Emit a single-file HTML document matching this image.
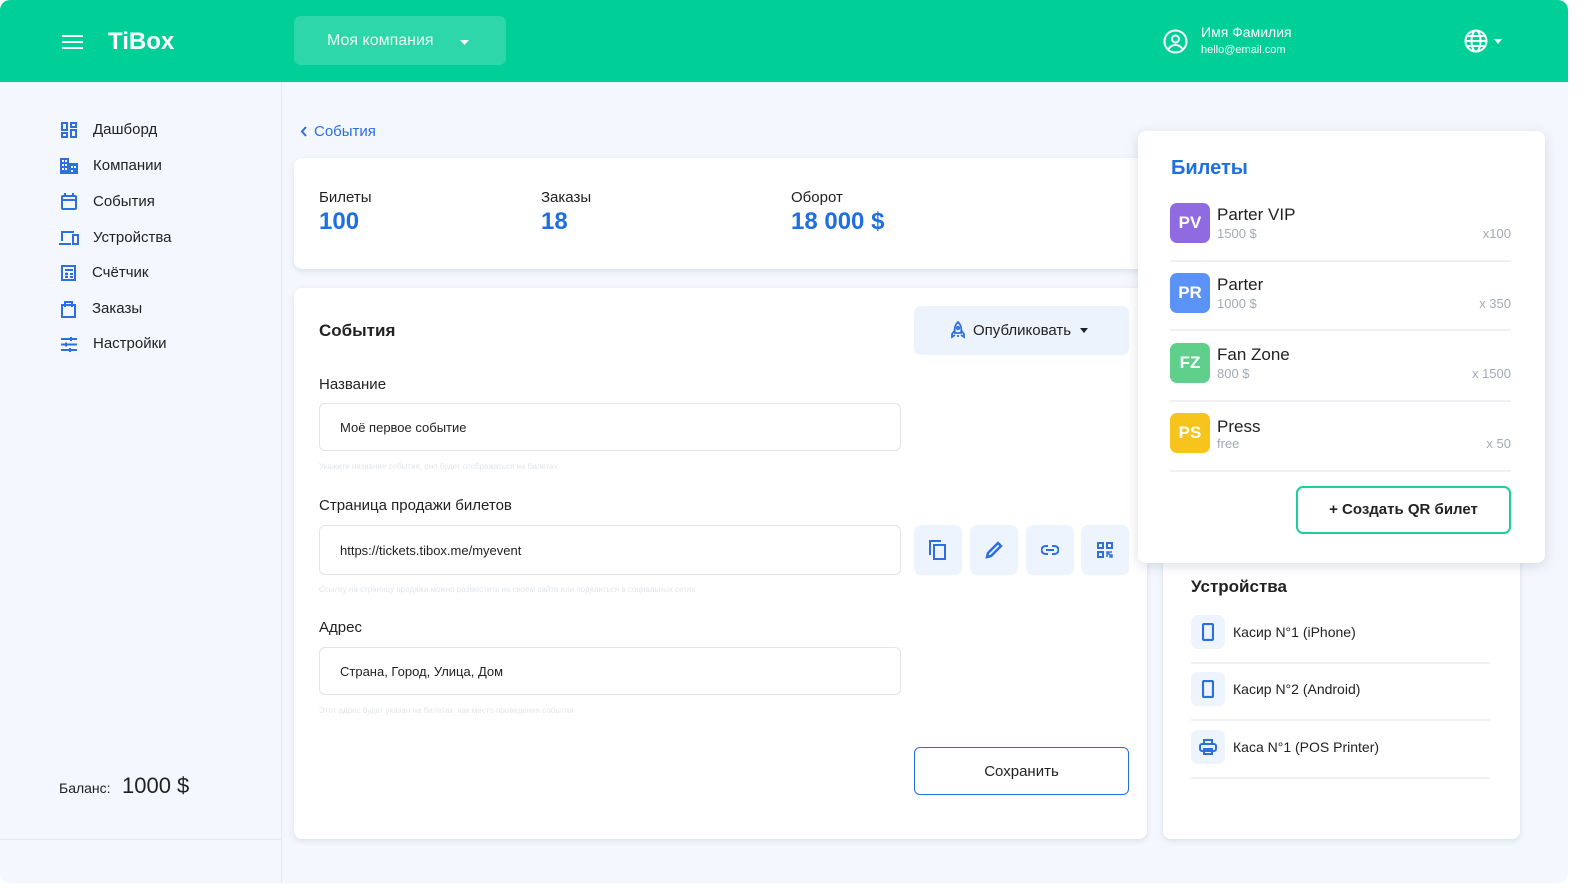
<!DOCTYPE html>
<html style="width:1590px;height:895px;overflow:hidden"><head><meta charset="utf-8"><style>
*{box-sizing:border-box;margin:0;padding:0}
body{width:1590px;height:895px;background:#fff;font-family:"Liberation Sans","DejaVu Sans",sans-serif;color:#222;position:relative;overflow:hidden}
.frame{position:absolute;left:0;top:0;width:1568px;height:883px;background:#f4f7fd;border-radius:10px;overflow:hidden}
.a{position:absolute}
.hdr{left:0;top:0;width:1568px;height:82px;background:#00cf98}
.t{position:absolute;white-space:nowrap;line-height:1}
.card{position:absolute;background:#fff;border-radius:8px;box-shadow:0 2px 6px rgba(30,50,90,.12)}
.nav svg{position:absolute}
.inp{position:absolute;left:319px;width:582px;border:1px solid #e1e4ea;border-radius:6px;background:#fff;font-size:13px;padding-left:20px;display:flex;align-items:center;color:#222}
.hint{position:absolute;left:319px;font-size:8px;color:#e2e5ea;white-space:nowrap}
.lbl{position:absolute;left:319px;font-size:15px;color:#222}
.ib{position:absolute;top:525px;width:48px;height:50px;background:#eef4fd;border-radius:7px;display:flex;align-items:center;justify-content:center}
.av{position:absolute;left:1170px;width:40px;height:40px;border-radius:7px;color:#fff;font-weight:bold;font-size:17px;display:flex;align-items:center;justify-content:center}
.tn{position:absolute;left:1217px;font-size:17px;color:#222;white-space:nowrap;line-height:1}
.tp{position:absolute;left:1217px;font-size:13px;color:#a3a9b5;line-height:1}
.tq{position:absolute;right:57px;font-size:13px;color:#a3a9b5;line-height:1}
.dv{position:absolute;height:2px;background:#eef0f3}
.di{position:absolute;left:1191px;width:34px;height:34px;border-radius:7px;background:#eef4fd;display:flex;align-items:center;justify-content:center}
.dt{position:absolute;left:1233px;font-size:14px;color:#222;line-height:1;white-space:nowrap}
</style></head><body>
<div class="frame">
<div class="a hdr"></div>
<svg class="a" style="left:62px;top:35px" width="21" height="14"><path d="M0 1h21M0 7h21M0 13h21" stroke="#fff" stroke-width="2"/></svg>
<div class="t" style="left:108px;top:30px;font-size:24px;font-weight:bold;color:#fff">TiBox</div>
<div class="a" style="left:294px;top:16px;width:212px;height:49px;background:rgba(255,255,255,.18);border-radius:7px"></div>
<div class="t" style="left:327px;top:33px;font-size:16px;color:#e6fbf4">Моя компания</div>
<svg class="a" style="left:460px;top:40px" width="9" height="5"><path d="M0 0h9L4.5 5z" fill="#fff"/></svg>
<svg class="a" style="left:1163px;top:29px" width="25" height="25" fill="none" stroke="#fff" stroke-width="2"><circle cx="12.5" cy="12.5" r="11"/><circle cx="12.5" cy="10" r="3.5"/><path d="M5.5 20c2-3 4.5-4 7-4s5 1 7 4"/></svg>
<div class="t" style="left:1201px;top:25px;font-size:14px;color:#fff">Имя Фамилия</div>
<div class="t" style="left:1201px;top:45px;font-size:11px;color:#fff">hello@email.com</div>
<svg class="a" style="left:1464px;top:29px" width="24" height="24" fill="none" stroke="#fff" stroke-width="2"><circle cx="12" cy="12" r="10.5"/><ellipse cx="12" cy="12" rx="4.5" ry="10.5"/><path d="M1.5 12h21M3 7h18M3 17h18"/></svg>
<svg class="a" style="left:1494px;top:39px" width="8" height="5"><path d="M0 0h8L4 5z" fill="#fff"/></svg>

<div class="a" style="left:281px;top:82px;width:1px;height:801px;background:#e6e9ef"></div>
<div class="a" style="left:0;top:839px;width:281px;height:1px;background:#e6e9ef"></div>
<div class="nav">
<svg style="left:61px;top:122px" width="16" height="16" fill="none" stroke="#2d6fe0" stroke-width="2"><rect x="1" y="1" width="5" height="7"/><rect x="10" y="1" width="5" height="4"/><rect x="1" y="11" width="5" height="4"/><rect x="10" y="8" width="5" height="7"/></svg>
<svg style="left:60px;top:158px" width="18" height="16" fill="#2d6fe0"><path d="M0 0h9v16H0zM9 5h9v11H9z"/><path d="M2 2h2v2H2zM5 2h2v2H5zM2 6h2v2H2zM5 6h2v2H5zM2 10h2v2H2zM5 10h2v2H5zM11 8h2v2h-2zM14 8h2v2h-2zM11 12h2v2h-2z" fill="#fff"/></svg>
<svg style="left:61px;top:193px" width="16" height="17" fill="none" stroke="#2d6fe0" stroke-width="2"><rect x="1" y="3" width="14" height="13" rx="1"/><path d="M1 7h14M4 0v4M12 0v4"/></svg>
<svg style="left:59px;top:230px" width="20" height="15" fill="none" stroke="#2d6fe0" stroke-width="2"><path d="M3 11V2h12M0 14h12"/><rect x="14" y="5" width="5" height="9"/></svg>
<svg style="left:61px;top:265px" width="15" height="16" fill="none" stroke="#2d6fe0" stroke-width="2"><rect x="1" y="1" width="13" height="14"/><path d="M4 9h3M5.5 7.5v3M9 9h3M4 12h3M9 12h3M4 5h8"/></svg>
<svg style="left:61px;top:300px" width="15" height="18" fill="none" stroke="#2d6fe0" stroke-width="2"><rect x="1" y="5" width="13" height="12"/><path d="M4 7V2h7v5"/></svg>
<svg style="left:61px;top:337px" width="16" height="15" fill="none" stroke="#2d6fe0" stroke-width="2"><path d="M0 2h16M0 7.5h16M0 13h16"/><path d="M10 0v4M5 5.5v4M9 11v4"/></svg>
</div>
<div class="t" style="left:93px;top:122px;font-size:15px">Дашборд</div>
<div class="t" style="left:93px;top:158px;font-size:15px">Компании</div>
<div class="t" style="left:93px;top:194px;font-size:15px">События</div>
<div class="t" style="left:93px;top:230px;font-size:15px">Устройства</div>
<div class="t" style="left:92px;top:265px;font-size:15px">Счётчик</div>
<div class="t" style="left:92px;top:301px;font-size:15px">Заказы</div>
<div class="t" style="left:93px;top:336px;font-size:15px">Настройки</div>
<div class="t" style="left:59px;top:781px;font-size:14px">Баланс:</div>
<div class="t" style="left:122px;top:775px;font-size:22px">1000 $</div>

<svg class="a" style="left:300px;top:126px" width="7" height="11" fill="none" stroke="#2d6fe0" stroke-width="2"><path d="M6 1L2 5.5 6 10"/></svg>
<div class="t" style="left:314px;top:124px;font-size:15px;color:#2d6fe0">События</div>

<div class="card" style="left:294px;top:158px;width:860px;height:111px"></div>
<div class="t" style="left:319px;top:190px;font-size:15px">Билеты</div>
<div class="t" style="left:319px;top:210px;font-size:24px;font-weight:bold;color:#1f6fe0">100</div>
<div class="t" style="left:541px;top:190px;font-size:15px">Заказы</div>
<div class="t" style="left:541px;top:210px;font-size:24px;font-weight:bold;color:#1f6fe0">18</div>
<div class="t" style="left:791px;top:190px;font-size:15px">Оборот</div>
<div class="t" style="left:791px;top:210px;font-size:24px;font-weight:bold;color:#1f6fe0">18 000 $</div>

<div class="card" style="left:294px;top:288px;width:853px;height:551px"></div>
<div class="t" style="left:319px;top:322px;font-size:17px;font-weight:bold">События</div>
<div class="a" style="left:914px;top:306px;width:215px;height:49px;background:#edf3fd;border-radius:7px"></div>
<svg class="a" style="left:950px;top:321px" width="16" height="18" fill="none" stroke="#2d6fe0" stroke-width="1.8"><path d="M8 1c3 3 4 6 3 11H5C4 7 5 4 8 1z"/><path d="M5 9l-3 4v3l3-2M11 9l3 4v3l-3-2M7 15h2"/><circle cx="8" cy="7" r="1.3"/></svg>
<div class="t" style="left:973px;top:323px;font-size:15px">Опубликовать</div>
<svg class="a" style="left:1080px;top:328px" width="8" height="5"><path d="M0 0h8L4 5z" fill="#222"/></svg>

<div class="lbl t" style="top:377px">Название</div>
<div class="inp" style="top:403px;height:48px">Моё первое событие</div>
<div class="hint" style="top:462px">Укажите название события, оно будет отображаться на билетах</div>
<div class="lbl t" style="top:498px">Страница продажи билетов</div>
<div class="inp" style="top:525px;height:50px">https://tickets.tibox.me/myevent</div>
<div class="hint" style="top:585px">Ссылку на страницу продажи можно разместить на своем сайте или поделиться в социальных сетях</div>
<div class="lbl t" style="top:620px">Адрес</div>
<div class="inp" style="top:647px;height:48px">Страна, Город, Улица, Дом</div>
<div class="hint" style="top:706px">Этот адрес будет указан на билетах, как место проведения события</div>

<div class="ib" style="left:914px"><svg width="18" height="20" fill="none" stroke="#2d6fe0" stroke-width="2"><path d="M1 15V1h11"/><rect x="5" y="5" width="11" height="14"/></svg></div>
<div class="ib" style="left:970px"><svg width="18" height="18" fill="none" stroke="#2d6fe0" stroke-width="2.5"><path d="M2 16l1-4L13 2l3 3L6 15z"/></svg></div>
<div class="ib" style="left:1026px"><svg width="18" height="10" fill="none" stroke="#2d6fe0" stroke-width="2"><path d="M7 1H4.5a4 4 0 0 0 0 8H7M11 1h2.5a4 4 0 0 1 0 8H11M5 5h8"/></svg></div>
<div class="ib" style="left:1081px"><svg width="16" height="16" fill="none" stroke="#2d6fe0" stroke-width="2"><rect x="1" y="1" width="5" height="5"/><rect x="10" y="1" width="5" height="5"/><rect x="1" y="10" width="5" height="5"/><path d="M10 10h2v2h-2zM13 13h2v2h-2zM13 10h2M10 13v2" stroke-width="1.5"/></svg></div>

<div class="a" style="left:914px;top:747px;width:215px;height:48px;border:1px solid #1f6fe0;border-radius:6px"></div>
<div class="t" style="left:914px;top:764px;width:215px;text-align:center;font-size:15px">Сохранить</div>

<div class="card" style="left:1163px;top:540px;width:357px;height:299px"></div>
<div class="t" style="left:1191px;top:578px;font-size:17px;font-weight:bold">Устройства</div>
<div class="di" style="top:615px"><svg width="12" height="18" fill="none" stroke="#2d6fe0" stroke-width="2.2"><rect x="1" y="1" width="10" height="16" rx="1"/></svg></div>
<div class="dt" style="top:625px">Касир N°1 (iPhone)</div>
<div class="dv" style="left:1191px;top:662px;width:299px"></div>
<div class="di" style="top:672px"><svg width="12" height="18" fill="none" stroke="#2d6fe0" stroke-width="2.2"><rect x="1" y="1" width="10" height="16" rx="1"/></svg></div>
<div class="dt" style="top:682px">Касир N°2 (Android)</div>
<div class="dv" style="left:1191px;top:719px;width:299px"></div>
<div class="di" style="top:730px"><svg width="18" height="16" fill="none" stroke="#2d6fe0" stroke-width="2"><rect x="5" y="1" width="8" height="4"/><rect x="1" y="5" width="16" height="7" rx="2"/><rect x="5" y="10" width="8" height="5"/></svg></div>
<div class="dt" style="top:740px">Каса N°1 (POS Printer)</div>
<div class="dv" style="left:1191px;top:777px;width:299px"></div>

<div class="card" style="left:1138px;top:131px;width:407px;height:432px;box-shadow:0 3px 12px rgba(30,50,90,.15)"></div>
<div class="t" style="left:1171px;top:158px;font-size:20px;font-weight:bold;color:#1f6fe0">Билеты</div>
<div class="av" style="top:203px;background:#8f6ae0">PV</div>
<div class="tn" style="top:206px">Parter VIP</div><div class="tp" style="top:227px">1500 $</div><div class="tq" style="top:227px">x100</div>
<div class="dv" style="left:1170px;top:260px;width:341px"></div>
<div class="av" style="top:273px;background:#5a93f5">PR</div>
<div class="tn" style="top:276px">Parter</div><div class="tp" style="top:297px">1000 $</div><div class="tq" style="top:297px">x 350</div>
<div class="dv" style="left:1170px;top:329px;width:341px"></div>
<div class="av" style="top:343px;background:#5fd08c">FZ</div>
<div class="tn" style="top:346px">Fan Zone</div><div class="tp" style="top:367px">800 $</div><div class="tq" style="top:367px">x 1500</div>
<div class="dv" style="left:1170px;top:400px;width:341px"></div>
<div class="av" style="top:413px;background:#f7c31d">PS</div>
<div class="tn" style="top:418px">Press</div><div class="tp" style="top:437px">free</div><div class="tq" style="top:437px">x 50</div>
<div class="dv" style="left:1170px;top:470px;width:341px"></div>
<div class="a" style="left:1296px;top:486px;width:215px;height:48px;border:2px solid #1dcf9a;border-radius:7px"></div>
<div class="t" style="left:1296px;top:502px;width:215px;text-align:center;font-size:15px;font-weight:bold">+ Создать QR билет</div>
</div>
</body></html>
